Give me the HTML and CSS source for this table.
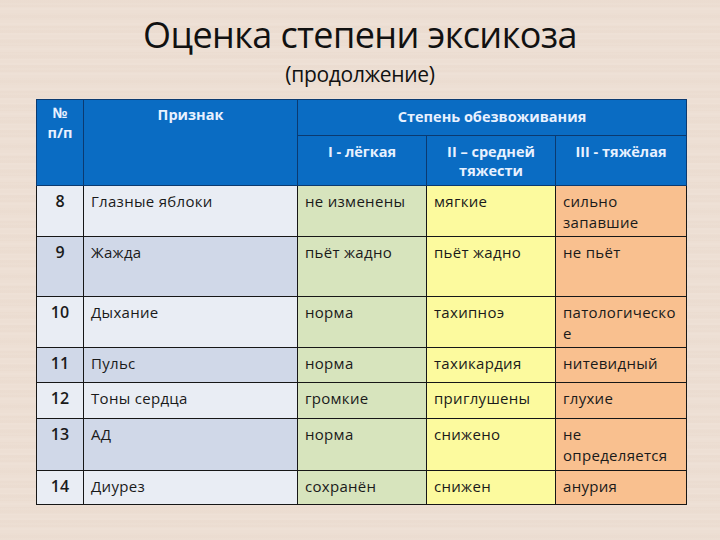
FILE: index.html
```html
<!DOCTYPE html>
<html lang="ru">
<head>
<meta charset="utf-8">
<link rel="stylesheet" href="styles.css">
</head>
<body>
<div class="slide">
  <header class="head">
    <h1 class="title">Оценка степени эксикоза</h1>
    <p class="subtitle">(продолжение)</p>
  </header>
  <table class="grid">
    <colgroup>
      <col class="c-num"><col class="c-sign"><col class="c-deg"><col class="c-deg"><col class="c-deg3">
    </colgroup>
    <thead>
      <tr class="h1">
        <th rowspan="2" class="th-num">№<br>п/п</th>
        <th rowspan="2" class="th-sign">Признак</th>
        <th colspan="3" class="th-group">Степень обезвоживания</th>
      </tr>
      <tr class="h2">
        <th>I - лёгкая</th>
        <th>II – средней тяжести</th>
        <th>III - тяжёлая</th>
      </tr>
    </thead>
    <tbody>
      <tr class="r-a h51"><td class="num">8</td><td>Глазные яблоки</td><td class="g">не изменены</td><td class="y">мягкие</td><td class="o">сильно запавшие</td></tr>
      <tr class="r-b h60"><td class="num">9</td><td>Жажда</td><td class="g">пьёт жадно</td><td class="y">пьёт жадно</td><td class="o">не пьёт</td></tr>
      <tr class="r-a h51"><td class="num">10</td><td>Дыхание</td><td class="g">норма</td><td class="y">тахипноэ</td><td class="o">патологическо е</td></tr>
      <tr class="r-b h35"><td class="num">11</td><td>Пульс</td><td class="g">норма</td><td class="y">тахикардия</td><td class="o">нитевидный</td></tr>
      <tr class="r-a h36"><td class="num">12</td><td>Тоны сердца</td><td class="g">громкие</td><td class="y">приглушены</td><td class="o">глухие</td></tr>
      <tr class="r-b h52"><td class="num">13</td><td>АД</td><td class="g">норма</td><td class="y">снижено</td><td class="o">не определяется</td></tr>
      <tr class="r-a h34"><td class="num">14</td><td>Диурез</td><td class="g">сохранён</td><td class="y">снижен</td><td class="o">анурия</td></tr>
    </tbody>
  </table>
</div>
</body>
</html>
```

FILE: styles.css
```css
html, body {
  margin: 0;
  padding: 0;
}
body {
  width: 720px;
  height: 540px;
  overflow: hidden;
  background-color: #eddfd4;
  background-image:
    repeating-linear-gradient(0deg, rgba(255,255,255,0.05) 0px, rgba(255,255,255,0.05) 2px, rgba(0,0,0,0) 2px, rgba(0,0,0,0) 5px),
    repeating-linear-gradient(0deg, rgba(180,140,110,0.03) 0px, rgba(180,140,110,0.03) 7px, rgba(0,0,0,0) 7px, rgba(0,0,0,0) 13px);
  font-family: "Open Sans", "Noto Sans", sans-serif;
}
.slide {
  width: 720px;
  height: 540px;
}
.head {
  height: 99px;
  display: flex;
  flex-direction: column;
  align-items: center;
}
.title {
  margin: 12px 0 0 0;
  font-weight: 400;
  font-size: 36px;
  line-height: 46px;
  letter-spacing: -0.6px;
  color: #111;
}
.subtitle {
  margin: 1px 0 0 0;
  font-size: 21px;
  line-height: 30px;
  letter-spacing: -0.3px;
  color: #111;
}
.grid {
  margin-left: 36px;
  border-collapse: collapse;
  table-layout: fixed;
  width: 650px;
  font-size: 15px;
  border: 1.5px solid #101010;
}
.c-num { width: 47px; }
.c-sign { width: 214px; }
.c-deg { width: 129px; }
.c-deg3 { width: 131px; }
th {
  background: #0a6cc3;
  color: #e8f1ff;
  font-weight: 700;
  font-size: 14.5px;
  line-height: 20px;
  border: 1px solid #0b3a70;
  vertical-align: top;
  padding: 0 4px;
  text-align: center;
}
.h1 { height: 36px; }
.h2 { height: 50px; }
.th-num { padding-top: 3px; }
.th-sign { padding-top: 5px; }
.th-group { vertical-align: middle; padding-bottom: 2px; }
.h2 th { padding-top: 6px; line-height: 19px; }
td {
  border: 1px solid #161616;
  vertical-align: top;
  padding: 5px 7px 0 7px;
  line-height: 21px;
  color: #1a1a1a;
  letter-spacing: 0.3px;
}
.num {
  text-align: center;
  padding-left: 2px;
  padding-right: 2px;
  padding-top: 5px;
  font-size: 16px;
  font-weight: 600;
  letter-spacing: 0;
}
.r-a td { background: #e9edf4; }
.r-b td { background: #d0d8e8; }
.r-a td.g, .r-b td.g { background: #d7e4bd; }
.r-a td.y, .r-b td.y { background: #fcfa9e; }
.r-a td.o, .r-b td.o { background: #f9c08f; }
.h51 { height: 51px; }
.h60 { height: 60px; }
.h35 { height: 35px; }
.h36 { height: 36px; }
.h52 { height: 52px; }
.h34 { height: 34px; }
```
